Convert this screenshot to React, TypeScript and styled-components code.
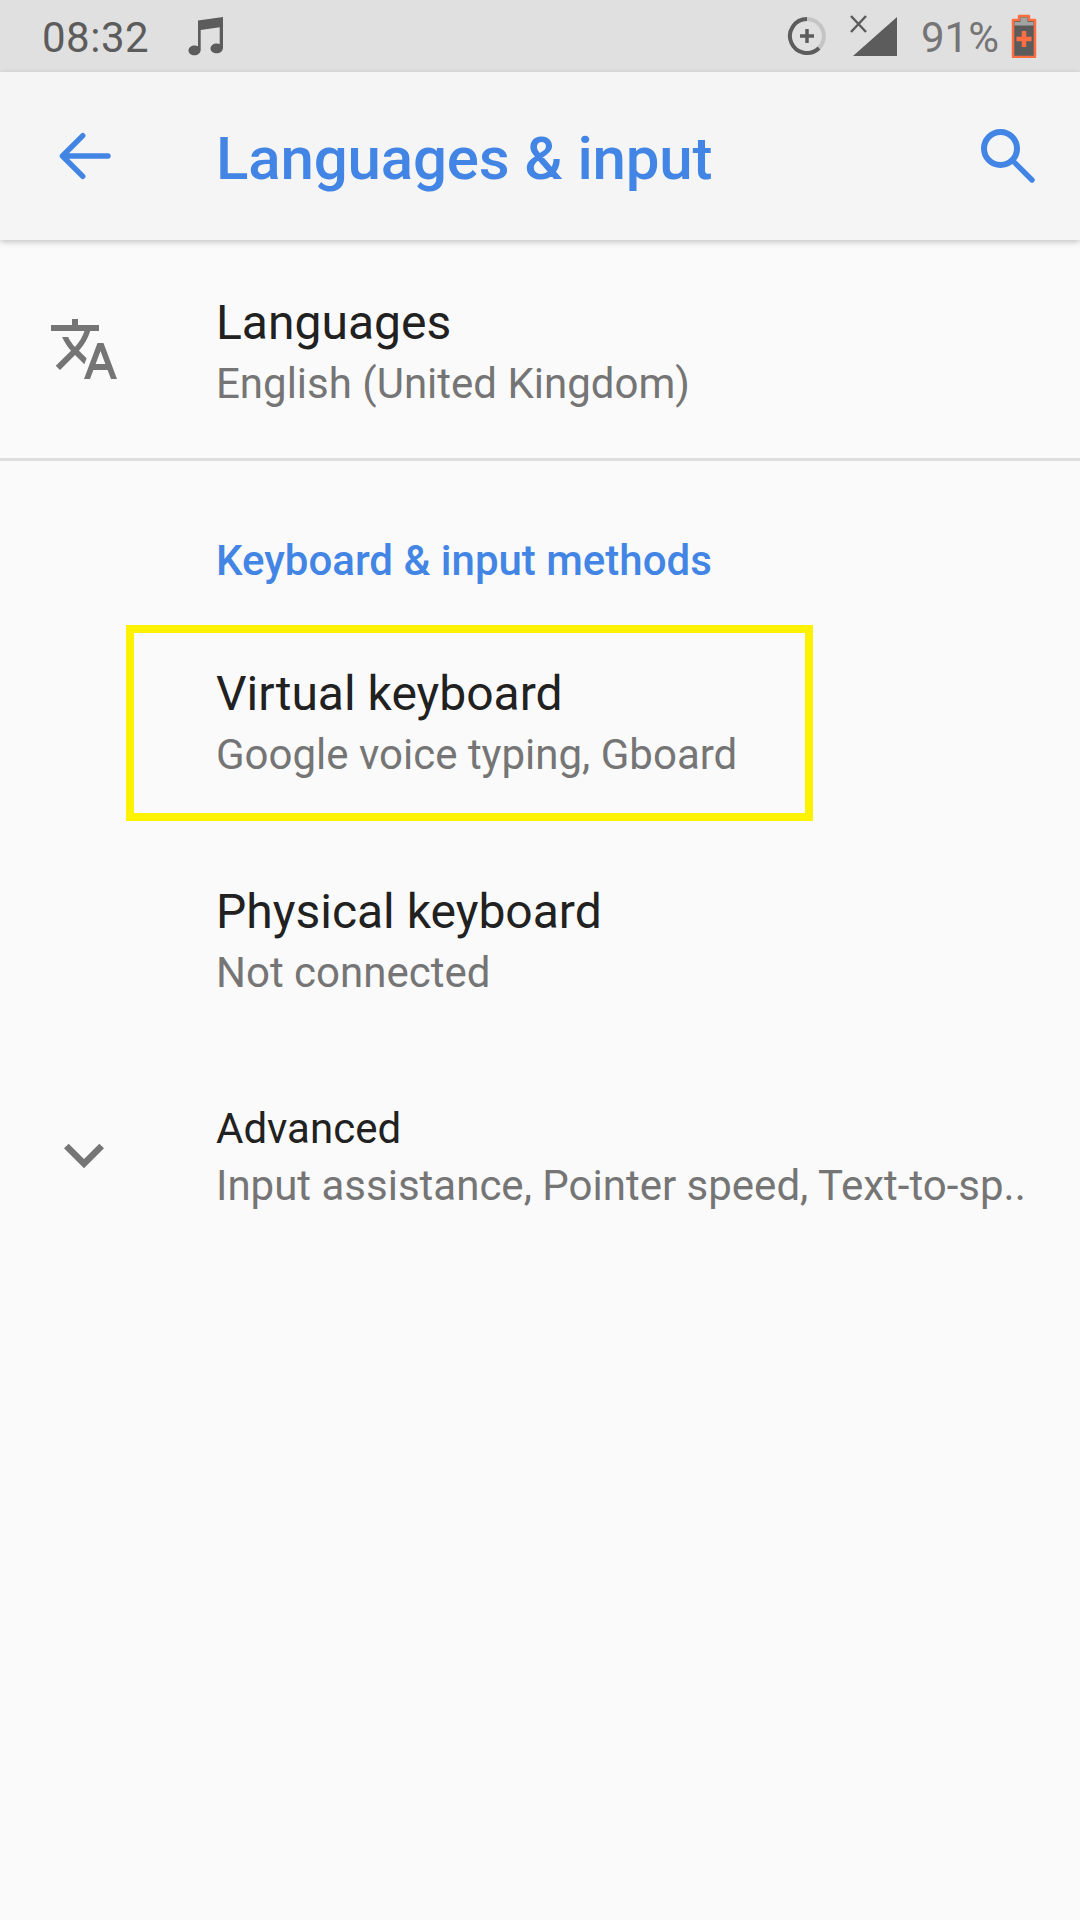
import React from 'react';
import styled, { createGlobalStyle } from 'styled-components';

const GlobalStyle = createGlobalStyle`
  html, body {
    margin: 0;
    padding: 0;
    background: #fafafa;
  }
  * {
    box-sizing: border-box;
  }
`;

const Screen = styled.div`
  width: 1080px;
  height: 1920px;
  overflow: hidden;
  background: #fafafa;
  font-family: Roboto, 'Noto Sans', sans-serif;
`;

const StatusBar = styled.div`
  height: 72px;
  display: flex;
  align-items: center;
  padding: 0 43px 0 42px;
  background: #e0e0e0;
  color: #5c5c5c;
  font-size: 42px;
`;

const Clock = styled.span`
  padding-top: 3px;
  line-height: 72px;
  letter-spacing: 0.5px;
`;

const NoteSlot = styled.div`
  display: flex;
  margin-left: 38px;
`;

const StatusIcons = styled.div`
  margin-left: auto;
  display: flex;
  align-items: center;
`;

const SyncIcon = styled.svg`
  width: 40px;
  height: 40px;
  margin-right: 22px;
`;

const SignalIcon = styled.svg`
  width: 50px;
  height: 44px;
  margin-right: 22px;
`;

const Percent = styled.span`
  padding-top: 3px;
  color: #757575;
  line-height: 72px;
`;

const BatteryIcon = styled.svg`
  width: 26px;
  height: 44px;
  margin-left: 12px;
`;

const AppBar = styled.header`
  position: relative;
  height: 168px;
  display: grid;
  grid-template-columns: 216px 1fr 72px;
  align-items: center;
  padding-right: 36px;
  background: #f5f5f5;
  box-shadow: 0 2px 6px rgba(0, 0, 0, 0.22);
`;

const BackSlot = styled.div`
  display: flex;
  padding-left: 48px;
`;

const Title = styled.h1`
  margin: 0;
  padding-top: 5px;
  color: #4285e4;
  font-size: 60px;
  font-weight: 500;
  line-height: 80px;
  letter-spacing: -0.15px;
`;

const IconSvg = styled.svg`
  width: 72px;
  height: 72px;
  display: block;
`;

const Row = styled.div<{ $height: number }>`
  position: relative;
  height: ${(p) => p.$height}px;
  display: grid;
  grid-template-columns: 216px 1fr;
  align-items: center;
`;

const IconSlot = styled.div<{ $left: number; $lift?: number }>`
  display: flex;
  padding-left: ${(p) => p.$left}px;
  padding-bottom: ${(p) => p.$lift ?? 0}px;
`;

const RowText = styled.div<{ $gap: number; $drop?: number }>`
  display: flex;
  flex-direction: column;
  gap: ${(p) => p.$gap}px;
  padding-top: ${(p) => p.$drop ?? 0}px;
  min-width: 0;
`;

const RowTitle = styled.div<{ $small?: boolean }>`
  color: #212121;
  font-size: ${(p) => (p.$small ? 42 : 48)}px;
  line-height: 56px;
`;

const RowSubtitle = styled.div`
  color: #757575;
  font-size: 42px;
  line-height: 56px;
  white-space: nowrap;
`;

const Divider = styled.div`
  height: 3px;
  margin-top: -1px;
  background: #dedede;
`;

const SectionHeading = styled.div`
  padding: 73px 0 27px 216px;
  color: #4285e4;
  font-size: 42px;
  font-weight: 500;
  line-height: 54px;
`;

const Highlight = styled.div`
  position: absolute;
  top: 10px;
  left: 126px;
  width: 687px;
  height: 196px;
  border: 8px solid #fff200;
`;

const ChevronSvg = styled.svg`
  width: 80px;
  height: 80px;
  display: block;
`;

const MusicNote = () => (
  <svg width="38" height="40" viewBox="0 0 38 40" aria-hidden="true">
    <path
      fill="#5c5c5c"
      d="M11 4.500 36 1v30.500c0 3.600-2.900 5.800-6.300 5.800-3.400 0-6.200-2.200-6.200-4.900 0-2.900 2.900-5 6.200-5 1 0 2.100.2 3 .7V11.200l-19 2.800v19.700c0 3.400-3 5.600-6.300 5.600C4.100 39.300 1.500 37.100 1.500 34.400c0-2.800 2.900-4.900 6.200-4.900 1.200 0 2.300.2 3.300.7z"
    />
  </svg>
);

const App = () => (
  <>
    <GlobalStyle />
    <Screen>
      <StatusBar>
        <Clock>08:32</Clock>
        <NoteSlot>
          <MusicNote />
        </NoteSlot>
        <StatusIcons>
          <SyncIcon viewBox="0 0 40 40" aria-hidden="true">
            <path d="M20 3a17 17 0 0 1 12 29" fill="none" stroke="#c4c4c4" strokeWidth="4" />
            <path d="M20 3a17 17 0 1 0 12 29" fill="none" stroke="#5c5c5c" strokeWidth="4" />
            <path d="M13 20h14M20 13v14" fill="none" stroke="#5c5c5c" strokeWidth="3.500" />
          </SyncIcon>
          <SignalIcon viewBox="0 0 50 44" aria-hidden="true">
            <path d="M4 42 48 3v39z" fill="#5c5c5c" />
            <path d="M2 2l15 16M17 2 2 18" fill="none" stroke="#5c5c5c" strokeWidth="2.500" />
          </SignalIcon>
          <Percent>91%</Percent>
          <BatteryIcon viewBox="0 0 26 44" aria-hidden="true">
            <path d="M8 2h10v4h6v37H2V6h6z" fill="#5c5c5c" stroke="#ff6e40" strokeWidth="2.500" strokeLinejoin="round" />
            <path d="M9.500 3.500h7V8h6v3.500H3.500V8h6z" fill="#a3a3a3" />
            <path d="M13 17v16M5.500 25h15" fill="none" stroke="#ff6e40" strokeWidth="4.500" />
          </BatteryIcon>
        </StatusIcons>
      </StatusBar>

      <AppBar>
        <BackSlot>
          <IconSvg viewBox="0 0 24 24" aria-hidden="true">
            <path
              d="M20 12H5M11.600 5.200 4.800 12l6.800 6.800"
              fill="none"
              stroke="#4285e4"
              strokeWidth="1.800"
              strokeLinecap="round"
              strokeLinejoin="round"
            />
          </IconSvg>
        </BackSlot>
        <Title>Languages &amp; input</Title>
        <IconSvg viewBox="0 0 24 24" aria-hidden="true">
          <circle cx="9.500" cy="9.500" r="5.500" fill="none" stroke="#4285e4" strokeWidth="2" />
          <path d="M14.300 14.300 20 20" fill="none" stroke="#4285e4" strokeWidth="1.800" strokeLinecap="round" />
        </IconSvg>
      </AppBar>

      <Row $height={219}>
        <IconSlot $left={48} $lift={2}>
          <IconSvg viewBox="0 0 24 24" aria-hidden="true">
            <path
              fill="#757575"
              d="M12.870 15.070l-2.540-2.510.03-.03c1.740-1.940 2.980-4.170 3.710-6.530H17V4h-7V2H8v2H1v2h11.170C11.500 7.920 10.440 9.750 9 11.350 8.070 10.320 7.300 9.190 6.690 8h-2c.73 1.630 1.730 3.170 2.980 4.560l-5.090 5.020L4 19l5-5 3.110 3.110.76-2.040zM18.500 10h-2L12 22h2l1.120-3h4.750L21 22h2l-4.500-12zm-2.620 7l1.620-4.330L19.120 17h-3.240z"
            />
          </IconSvg>
        </IconSlot>
        <RowText $gap={5} $drop={8}>
          <RowTitle>Languages</RowTitle>
          <RowSubtitle>English (United Kingdom)</RowSubtitle>
        </RowText>
      </Row>
      <Divider />

      <SectionHeading>Keyboard &amp; input methods</SectionHeading>

      <Row $height={218}>
        <span />
        <RowText $gap={5}>
          <RowTitle>Virtual keyboard</RowTitle>
          <RowSubtitle>Google voice typing, Gboard</RowSubtitle>
        </RowText>
        <Highlight />
      </Row>
      <Row $height={218}>
        <span />
        <RowText $gap={5}>
          <RowTitle>Physical keyboard</RowTitle>
          <RowSubtitle>Not connected</RowSubtitle>
        </RowText>
      </Row>
      <Row $height={212}>
        <IconSlot $left={44} $lift={4}>
          <ChevronSvg viewBox="0 0 24 24" aria-hidden="true">
            <path fill="#757575" d="M16.590 8.590 12 13.170 7.410 8.590 6 10l6 6 6-6z" />
          </ChevronSvg>
        </IconSlot>
        <RowText $gap={1}>
          <RowTitle $small>Advanced</RowTitle>
          <RowSubtitle>Input assistance, Pointer speed, Text-to-sp..</RowSubtitle>
        </RowText>
      </Row>
    </Screen>
  </>
);

export default App;
